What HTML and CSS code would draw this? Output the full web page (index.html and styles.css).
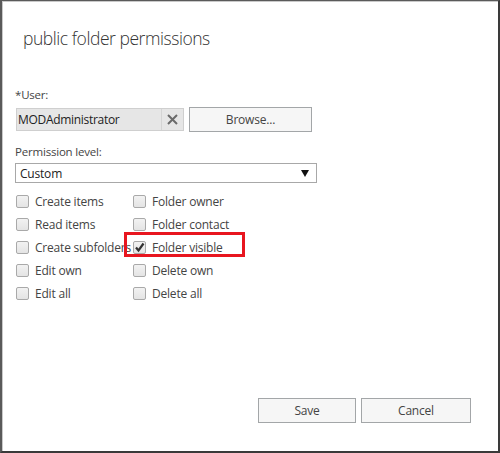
FILE: index.html
```html
<!DOCTYPE html>
<html>
<head>
<meta charset="utf-8">
<link rel="stylesheet" href="styles.css">
</head>
<body>
<div class="dialog">
  <h1 class="title">public folder permissions</h1>
  <div class="label">*User:</div>
  <div class="user-row">
    <div class="user-field">
      <span class="user-value">MODAdministrator</span>
      <span class="clear-btn">
        <svg width="11" height="11" viewBox="0 0 11 11"><path d="M1 1L10 10M10 1L1 10" stroke="#6b6b6b" stroke-width="2"/></svg>
      </span>
    </div>
    <div class="btn browse">Browse...</div>
  </div>
  <div class="label perm-label">Permission level:</div>
  <div class="select">
    <span>Custom</span>
    <svg class="arrow" width="8" height="7" viewBox="0 0 8 7"><path d="M0 0H8L4 7Z" fill="#111"/></svg>
  </div>
  <div class="checks">
    <div class="item"><span class="box"></span><span>Create items</span></div>
    <div class="item"><span class="box"></span><span>Folder owner</span></div>
    <div class="item"><span class="box"></span><span>Read items</span></div>
    <div class="item"><span class="box"></span><span>Folder contact</span></div>
    <div class="item"><span class="box"></span><span>Create subfolders</span></div>
    <div class="item highlight"><span class="box checked"><svg width="11" height="11" viewBox="0 0 11 11"><path d="M2 5.5L4.5 8.5L9.5 1.5" stroke="#333" stroke-width="2.2" fill="none"/></svg></span><span>Folder visible</span><span class="redbox"></span></div>
    <div class="item"><span class="box"></span><span>Edit own</span></div>
    <div class="item"><span class="box"></span><span>Delete own</span></div>
    <div class="item"><span class="box"></span><span>Edit all</span></div>
    <div class="item"><span class="box"></span><span>Delete all</span></div>
  </div>
  <div class="footer">
    <div class="btn save">Save</div>
    <div class="btn cancel">Cancel</div>
  </div>
</div>
</body>
</html>
```
FILE: styles.css
```css
html, body {
  margin: 0;
  padding: 0;
  background: #fff;
}
.dialog {
  width: 500px;
  height: 453px;
  box-sizing: border-box;
  border-top: 1px solid #5a5a5a;
  border-left: 2px solid #5a5a5a;
  border-right: 2px solid #3a3a3a;
  border-bottom: 2px solid #3a3a3a;
  box-shadow: inset 1px 1px 0 #c9c9c9;
  padding: 0 0 0 13px;
  display: flex;
  flex-direction: column;
  font-family: "Open Sans", "Noto Sans", sans-serif;
  color: #333;
}
.title {
  margin: 25px 0 0 8px;
  font-size: 17.5px;
  font-weight: 300;
  line-height: 24px;
  color: #333;
  letter-spacing: -0.45px;
}
.label {
  margin-top: 37px;
  font-size: 11.5px;
  line-height: 16px;
  color: #444;
  letter-spacing: -0.2px;
}
.perm-label {
  margin-top: 12px;
}
.user-row {
  margin-top: 4px;
  display: flex;
  align-items: center;
  gap: 5px;
}
.user-field {
  margin-left: 1px;
  width: 168px;
  height: 23px;
  box-sizing: border-box;
  border: 1px solid #cfcfcf;
  background: #e6e6e6;
  display: flex;
}
.user-value {
  flex: 1;
  font-size: 12px;
  line-height: 21px;
  padding-left: 1px;
  color: #222;
  letter-spacing: -0.3px;
}
.clear-btn {
  width: 21px;
  border-left: 1px solid #d4d4d4;
  display: flex;
  align-items: center;
  justify-content: center;
}
.btn {
  box-sizing: border-box;
  height: 25px;
  border: 1px solid #a3a6a8;
  background: #f6f6f6;
  font-size: 12px;
  line-height: 23px;
  text-align: center;
  color: #444;
  letter-spacing: -0.2px;
}
.browse {
  width: 123px;
}
.select {
  margin-top: 3px;
  width: 302px;
  height: 20px;
  box-sizing: border-box;
  border: 1px solid #a8a8a8;
  display: flex;
  align-items: center;
  justify-content: space-between;
  padding: 0 7px 0 4px;
  font-size: 12px;
  color: #222;
  letter-spacing: -0.2px;
}
.checks {
  margin-top: 7px;
  display: grid;
  grid-template-columns: 117px auto;
  grid-auto-rows: 23px;
  font-size: 12px;
  color: #444;
  letter-spacing: -0.2px;
}
.item {
  position: relative;
  display: flex;
  align-items: center;
  gap: 6px;
  white-space: nowrap;
  padding-left: 1px;
}
.box {
  flex: none;
  width: 13px;
  height: 13px;
  box-sizing: border-box;
  border: 1px solid #a9a9a9;
  border-radius: 2px;
  background: linear-gradient(#f2f2f2, #e4e4e4);
  display: flex;
  align-items: center;
  justify-content: center;
}
.redbox {
  position: absolute;
  left: -8px;
  top: -4px;
  width: 121px;
  height: 25px;
  box-sizing: border-box;
  border: 3px solid #e8161f;
  z-index: 2;
}
.footer {
  margin-top: auto;
  margin-bottom: 28px;
  padding-right: 27px;
  display: flex;
  justify-content: flex-end;
  gap: 5px;
}
.save {
  width: 98px;
}
.cancel {
  width: 110px;
}
```
